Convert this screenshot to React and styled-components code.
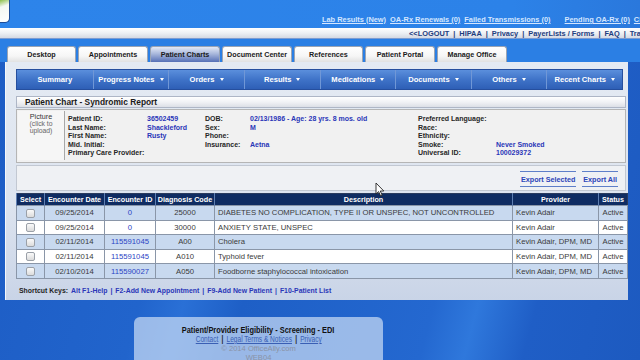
import React from 'react';
import styled, { createGlobalStyle } from 'styled-components';

const GlobalStyle = createGlobalStyle`
  html, body {
    margin: 0;
    padding: 0;
  }
  body {
    width: 640px;
    height: 360px;
    overflow: hidden;
    font-family: "Liberation Sans", Arial, sans-serif;
    background: linear-gradient(105deg, #1d5cc4 0%, #2164cc 30%, #2a70d6 36%, #1e5fc6 44%, #2468d0 70%, #2f78dc 76%, #1f5ec6 84%, #1d5ac0 100%);
  }
`;

const Page = styled.div`
  width: 640px;
  height: 360px;
  overflow: hidden;
  position: relative;
`;

const TopBar = styled.div`
  height: 28px;
  display: flex;
  align-items: flex-start;
  overflow: hidden;
  background: linear-gradient(90deg, #2d84ea 0%, #2c82e8 80%, #2a78dc 100%);
`;

const LogoCorner = styled.div`
  width: 9px;
  height: 22px;
  background: linear-gradient(160deg, #8bbf4a 0%, #f4f7f2 30%, #ffffff 100%);
  border-right: 1px solid #1d4c98;
  border-bottom: 1px solid #1d4c98;
  border-bottom-right-radius: 5px;
  flex: none;
`;

const Alerts = styled.div`
  display: flex;
  gap: 4px;
  margin-left: 312px;
  margin-top: 15px;
  white-space: nowrap;
`;

const AlertLink = styled.a`
  font-size: 7.4px;
  font-weight: bold;
  color: #d4e6ff;
  text-decoration: underline;
  margin-left: ${(p) => p.$push || 0}px;
`;

const LinkBar = styled.div`
  height: 11px;
  background: linear-gradient(180deg, #ffffff 0%, #eef0f4 50%, #d5d9e2 100%);
  border-bottom: 1px solid #7d9bd0;
  display: flex;
  align-items: center;
  padding-left: 409px;
  white-space: nowrap;
  overflow: hidden;
  box-sizing: border-box;
`;

const UtilLink = styled.span`
  font-size: 7.4px;
  font-weight: bold;
  color: #1e3d7e;
`;

const Sep = styled.span`
  font-size: 7.4px;
  font-weight: bold;
  color: #1e3d7e;
  margin: 0 4px;
`;

const TabRow = styled.div`
  display: flex;
  gap: 2px;
  padding: 7px 0 0 7px;
  height: 23px;
  box-sizing: border-box;
  background: #2b7fe4;
`;

const Tab = styled.div`
  width: ${(p) => p.$w || 70}px;
  height: 16px;
  box-sizing: border-box;
  border: 1px solid #9aa4b4;
  border-bottom: none;
  border-radius: 3px 3px 0 0;
  display: flex;
  align-items: center;
  justify-content: center;
  font-size: 7.2px;
  font-weight: bold;
  color: #1a1a1a;
  background: ${(p) =>
    p.$active
      ? 'linear-gradient(180deg, #e4eaf6 0%, #a9b8dc 45%, #5670b6 100%)'
      : 'linear-gradient(180deg, #ffffff 0%, #f6f6f6 60%, #e2e2e2 100%)'};
`;

const Panel = styled.div`
  margin: 0 12px 0 5px;
  padding: 7px 2px 0 10px;
  background: linear-gradient(180deg, #e4eaf3 0%, #dde4ef 60%, #c9d4e7 100%);
  border-left: 1px solid #f4f7fb;
  box-sizing: border-box;
  height: 238px;
  position: relative;
`;

const NavBar = styled.div`
  display: grid;
  grid-template-columns: repeat(8, 1fr);
  height: 21px;
  margin-right: 3px;
  background: linear-gradient(180deg, #5b8fdc 0%, #3f73c8 50%, #2e5fb6 100%);
  border: 1px solid #264f9e;
  box-sizing: border-box;
`;

const NavItem = styled.div`
  display: flex;
  align-items: center;
  justify-content: center;
  gap: 5px;
  font-size: 7.6px;
  font-weight: bold;
  color: #ffffff;
  border-left: ${(p) => (p.$first ? 'none' : '1px solid #7097d6')};
`;

const Caret = styled.span`
  width: 0;
  height: 0;
  border-left: 2.5px solid transparent;
  border-right: 2.5px solid transparent;
  border-top: 3px solid #ffffff;
`;

const SectionHeader = styled.div`
  margin-top: 6px;
  height: 12px;
  box-sizing: border-box;
  padding-left: 8px;
  display: flex;
  align-items: center;
  font-size: 8.4px;
  font-weight: bold;
  color: #1a1a1a;
  background: linear-gradient(180deg, #ffffff 0%, #f1f2f5 50%, #dcdfe6 100%);
  border: 1px solid #aeb6c6;
`;

const InfoBox = styled.div`
  margin-top: 1px;
  height: 54px;
  box-sizing: border-box;
  background: #f1f1f1;
  border: 1px solid #b5b5b5;
  display: flex;
`;

const PictureBox = styled.div`
  width: 47px;
  margin: 1px 3px 2px 1px;
  background: #f6f6f6;
  border-right: 1px solid #a8a8a8;
  display: flex;
  flex-direction: column;
  align-items: center;
  padding-top: 2px;
  box-sizing: border-box;
  line-height: 7px;
`;

const PicTitle = styled.span`
  font-size: 7.2px;
  color: #333;
`;

const PicSub = styled.span`
  font-size: 6.8px;
  color: #666;
`;

const InfoGrid = styled.div`
  display: grid;
  grid-template-columns: 79px 58px 45px 168px 78px 1fr;
  grid-auto-rows: 8.6px;
  padding-top: 5px;
  flex: 1;
`;

const Label = styled.span`
  font-size: 7px;
  font-weight: bold;
  color: #262626;
  white-space: nowrap;
  line-height: 8.6px;
`;

const Value = styled.span`
  font-size: 7px;
  font-weight: bold;
  color: #2a36b8;
  white-space: nowrap;
  line-height: 8.6px;
`;

const ExportBox = styled.div`
  margin-top: 2px;
  height: 26px;
  box-sizing: border-box;
  background: #eff1f4;
  border: 1px solid #c2c8d2;
  display: flex;
  justify-content: flex-end;
  align-items: center;
  gap: 6px;
  padding: 2px 7px 0 0;
`;

const ExportLink = styled.span`
  font-size: 7.2px;
  font-weight: bold;
  color: #2a44b8;
  padding: 3px 1px 2px;
  border-top: 1px solid #5e7fc8;
  border-bottom: 1px solid #5e7fc8;
`;

const Table = styled.table`
  margin-top: 2px;
  width: 611px;
  border-collapse: collapse;
  table-layout: fixed;
  border: 1px solid #2a3b5e;
`;

const Th = styled.th`
  height: 11px;
  padding: 0;
  font-size: 7.2px;
  font-weight: bold;
  color: #ffffff;
  background: #0f2c62;
  border-left: 1px solid #5f7fb2;
  text-align: center;
  white-space: nowrap;
`;

const Tr = styled.tr`
  background: ${(p) => (p.$alt ? '#c8d9ef' : '#ffffff')};
`;

const Td = styled.td`
  height: 13.6px;
  padding: 0 0 0 ${(p) => (p.$left ? 3 : 0)}px;
  font-size: 7.7px;
  color: ${(p) => (p.$link ? '#2b45c4' : '#3a3a3a')};
  text-align: ${(p) => (p.$left ? 'left' : 'center')};
  border: 1px solid #8a96a8;
  white-space: nowrap;
  overflow: hidden;
`;

const Check = styled.span`
  display: inline-block;
  width: 7px;
  height: 7px;
  border: 1px solid #9aa0a8;
  border-radius: 2px;
  background: linear-gradient(180deg, #fafafa, #dcdcdc);
  vertical-align: middle;
`;

const Shortcuts = styled.div`
  height: 23px;
  display: flex;
  align-items: center;
  padding-left: 3px;
  font-size: 6.9px;
  font-weight: bold;
  white-space: nowrap;
`;

const ShortLabel = styled.span`
  color: #1f1f1f;
  margin-right: 3px;
`;

const ShortLink = styled.span`
  color: #2a36b8;
`;

const ShortSep = styled.span`
  color: #2a36b8;
  margin: 0 3px;
`;

const Footer = styled.div`
  margin: 17px 0 0 134px;
  width: 249px;
  height: 60px;
  border-radius: 6px 6px 0 0;
  background: rgba(205, 222, 245, 0.7);
  display: flex;
  flex-direction: column;
  align-items: center;
  padding-top: 9px;
  box-sizing: border-box;
  line-height: 9px;
  overflow: hidden;
`;

const Narrow = styled.div`
  transform: scaleX(${(p) => p.$sx || 0.82});
  white-space: nowrap;
`;

const FooterTitle = styled(Narrow)`
  font-size: 9px;
  font-weight: bold;
  color: #111;
`;

const FooterLinks = styled(Narrow)`
  font-size: 8.2px;
  color: #3a5fb4;
  a {
    color: #3a5fb4;
    text-decoration: underline;
  }
`;

const FooterSep = styled.span`
  color: #222;
  font-weight: bold;
  margin: 0 4px;
`;

const Copy = styled.div`
  font-size: 7.6px;
  color: #8a93a6;
`;

const Cursor = styled.svg`
  position: absolute;
  left: 369px;
  top: 120px;
`;

const alerts = [
  { t: 'Lab Results (New)' },
  { t: 'OA-Rx Renewals (0)' },
  { t: 'Failed Transmissions (0)' },
  { t: 'Pending OA-Rx (0)', push: 10 },
  { t: 'CD Alerts (0)' },
];

const utils = ['<<LOGOUT', 'HIPAA', 'Privacy', 'PayerLists / Forms', 'FAQ', 'Training'];

const tabs = [
  { t: 'Desktop', w: 69 },
  { t: 'Appointments' },
  { t: 'Patient Charts', active: true },
  { t: 'Document Center' },
  { t: 'References', w: 69 },
  { t: 'Patient Portal' },
  { t: 'Manage Office' },
];

const navs = ['Summary', 'Progress Notes', 'Orders', 'Results', 'Medications', 'Documents', 'Others', 'Recent Charts'];

const info = [
  ['Patient ID:', '36502459', 'DOB:', '02/13/1986 - Age: 28 yrs. 8 mos. old', 'Preferred Language:', ''],
  ['Last Name:', 'Shackleford', 'Sex:', 'M', 'Race:', ''],
  ['First Name:', 'Rusty', 'Phone:', '', 'Ethnicity:', ''],
  ['Mid. Initial:', '', 'Insurance:', 'Aetna', 'Smoke:', 'Never Smoked'],
  ['Primary Care Provider:', '', '', '', 'Universal ID:', '100029372'],
];

const rows = [
  ['09/25/2014', '0', '25000', 'DIABETES NO COMPLICATION, TYPE II OR UNSPEC, NOT UNCONTROLLED', 'Kevin Adair'],
  ['09/25/2014', '0', '30000', 'ANXIETY STATE, UNSPEC', 'Kevin Adair'],
  ['02/11/2014', '115591045', 'A00', 'Cholera', 'Kevin Adair, DPM, MD'],
  ['02/11/2014', '115591045', 'A010', 'Typhoid fever', 'Kevin Adair, DPM, MD'],
  ['02/10/2014', '115590027', 'A050', 'Foodborne staphylococcal intoxication', 'Kevin Adair, DPM, MD'],
];

const cols = [28, 60, 51, 59, 298, 86, 29];

export default function App() {
  return (
    <Page>
      <GlobalStyle />
      <TopBar>
        <LogoCorner />
        <Alerts>
          {alerts.map((a) => (
            <AlertLink key={a.t} $push={a.push}>
              {a.t}
            </AlertLink>
          ))}
        </Alerts>
      </TopBar>
      <LinkBar>
        {utils.map((u, i) => (
          <React.Fragment key={u}>
            {i > 0 && <Sep>|</Sep>}
            <UtilLink>{u}</UtilLink>
          </React.Fragment>
        ))}
      </LinkBar>
      <TabRow>
        {tabs.map((t) => (
          <Tab key={t.t} $w={t.w} $active={t.active}>
            {t.t}
          </Tab>
        ))}
      </TabRow>
      <Panel>
        <NavBar>
          {navs.map((n, i) => (
            <NavItem key={n} $first={i === 0}>
              {n}
              {i > 0 && <Caret />}
            </NavItem>
          ))}
        </NavBar>
        <SectionHeader>Patient Chart - Syndromic Report</SectionHeader>
        <InfoBox>
          <PictureBox>
            <PicTitle>Picture</PicTitle>
            <PicSub>(click to</PicSub>
            <PicSub>upload)</PicSub>
          </PictureBox>
          <InfoGrid>
            {info.map((r) =>
              r.map((c, j) =>
                j % 2 === 0 ? (
                  <Label key={`${r[0]}-${j}`}>{c}</Label>
                ) : (
                  <Value key={`${r[0]}-${j}`}>{c}</Value>
                )
              )
            )}
          </InfoGrid>
        </InfoBox>
        <ExportBox>
          <ExportLink>Export Selected</ExportLink>
          <ExportLink>Export All</ExportLink>
        </ExportBox>
        <Table>
          <colgroup>
            {cols.map((w, i) => (
              <col key={i} style={{ width: w }} />
            ))}
          </colgroup>
          <thead>
            <tr>
              <Th>Select</Th>
              <Th>Encounter Date</Th>
              <Th>Encounter ID</Th>
              <Th>Diagnosis Code</Th>
              <Th>Description</Th>
              <Th>Provider</Th>
              <Th>Status</Th>
            </tr>
          </thead>
          <tbody>
            {rows.map((r, i) => (
              <Tr key={i} $alt={i % 2 === 0}>
                <Td>
                  <Check />
                </Td>
                <Td>{r[0]}</Td>
                <Td $link>{r[1]}</Td>
                <Td>{r[2]}</Td>
                <Td $left>{r[3]}</Td>
                <Td $left>{r[4]}</Td>
                <Td>Active</Td>
              </Tr>
            ))}
          </tbody>
        </Table>
        <Shortcuts>
          <ShortLabel>Shortcut Keys:</ShortLabel>
          <ShortLink>Alt F1-Help</ShortLink>
          <ShortSep>|</ShortSep>
          <ShortLink>F2-Add New Appointment</ShortLink>
          <ShortSep>|</ShortSep>
          <ShortLink>F9-Add New Patient</ShortLink>
          <ShortSep>|</ShortSep>
          <ShortLink>F10-Patient List</ShortLink>
        </Shortcuts>
        <Cursor width="10" height="15" viewBox="0 0 10 15">
          <path d="M1 1 L1 12 L3.6 9.6 L5.6 14 L7.2 13.3 L5.3 9 L8.8 9 Z" fill="#ffffff" stroke="#222" strokeWidth="0.9" />
        </Cursor>
      </Panel>
      <Footer>
        <FooterTitle>Patient/Provider Eligibility - Screening - EDI</FooterTitle>
        <FooterLinks $sx={0.8}>
          <a>Contact</a>
          <FooterSep>|</FooterSep>
          <a>Legal Terms &amp; Notices</a>
          <FooterSep>|</FooterSep>
          <a>Privacy</a>
        </FooterLinks>
        <Copy>© 2014 OfficeAlly.com</Copy>
        <Copy>WEB04</Copy>
      </Footer>
    </Page>
  );
}
